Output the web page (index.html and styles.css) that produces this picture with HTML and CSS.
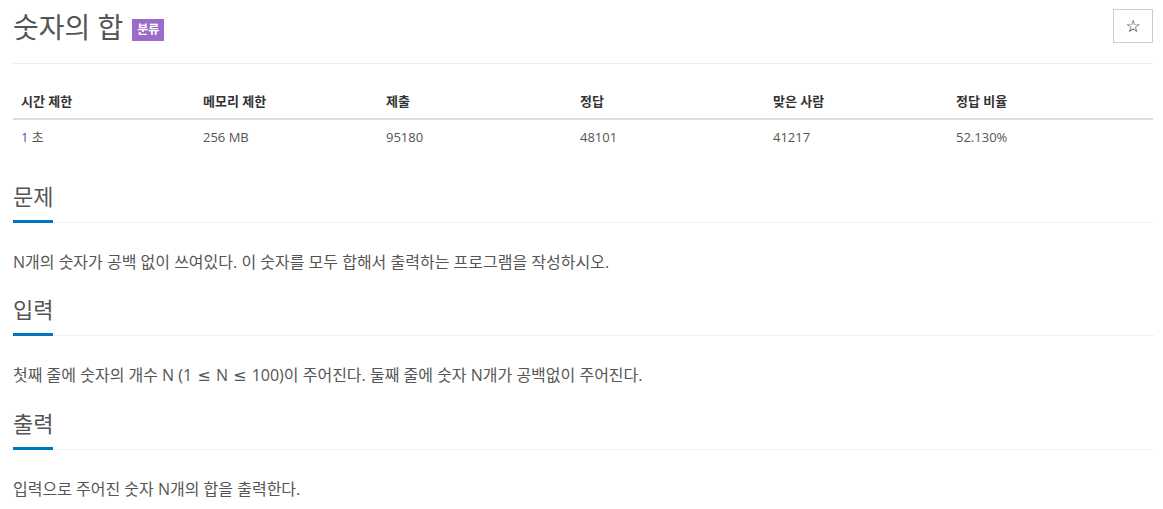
FILE: index.html
```html
<!DOCTYPE html>
<html lang="ko">
<head>
<meta charset="utf-8">
<link rel="stylesheet" href="styles.css">
</head>
<body>
<div class="page">
  <div class="page-header">
    <h1 class="title"><span>숫자의 합</span> <span class="badge">분류</span></h1>
    <button class="star">☆</button>
  </div>
  <table class="info">
    <thead>
      <tr><th class="c1">시간 제한</th><th class="c2">메모리 제한</th><th class="c3">제출</th><th class="c4">정답</th><th class="c5">맞은 사람</th><th class="c6">정답 비율</th></tr>
    </thead>
    <tbody>
      <tr><td><span class="num">1</span> 초</td><td>256 MB</td><td>95180</td><td>48101</td><td>41217</td><td>52.130%</td></tr>
    </tbody>
  </table>
  <section class="sec">
    <div class="headline"><h2>문제</h2></div>
    <p>N개의 숫자가 공백 없이 쓰여있다. 이 숫자를 모두 합해서 출력하는 프로그램을 작성하시오.</p>
  </section>
  <section class="sec">
    <div class="headline"><h2>입력</h2></div>
    <p>첫째 줄에 숫자의 개수 N (1 <span class="rel">≤</span> N <span class="rel">≤</span> 100)이 주어진다. 둘째 줄에 숫자 N개가 공백없이 주어진다.</p>
  </section>
  <section class="sec">
    <div class="headline"><h2>출력</h2></div>
    <p>입력으로 주어진 숫자 N개의 합을 출력한다.</p>
  </section>
</div>
</body>
</html>
```
FILE: styles.css
```css
* { box-sizing: border-box; }
body {
  margin: 0;
  background: #fff;
  font-family: "Open Sans", "Noto Sans CJK KR", sans-serif;
  color: #555;
  font-size: 13px;
}
.page { padding: 0 10px 0 13px; }
.page-header {
  display: flex;
  justify-content: space-between;
  align-items: flex-start;
  border-bottom: 1px solid #eee;
  height: 64px;
  padding-top: 9px;
}
.title {
  margin: 0;
  font-size: 28px;
  font-weight: 400;
  color: #555;
  line-height: 36px;
  display: flex;
  align-items: center;
}
.badge {
  display: inline-block;
  margin-left: 9px;
  background: #9b6bcc;
  color: #fff;
  font-size: 12px;
  font-weight: 700;
  padding: 0 5px;
  height: 22px;
  line-height: 22px;
  margin-top: 6px;
}
.star {
  width: 40px;
  height: 34px;
  border: 1px solid #ccc;
  background: #fff;
  font-size: 17px;
  line-height: 1;
  color: #111;
  font-family: "DejaVu Sans", sans-serif;
  padding: 0;
}
.info {
  width: 100%;
  border-collapse: collapse;
  margin-top: 20px;
  margin-bottom: 25px;
  table-layout: fixed;
}
.c1 { width: 182px; }
.c2 { width: 183px; }
.c3 { width: 194px; }
.c4 { width: 193px; }
.c5 { width: 183px; }
.info th {
  text-align: left;
  font-weight: 700;
  color: #333;
  padding: 7px 8px 8px;
  border-bottom: 2px solid #ddd;
  font-size: 13px;
}
.info td {
  padding: 7px 8px 8px;
  color: #555;
  font-size: 13px;
}
.num { color: #6f42c1; }
.sec { margin-top: 17px; }
.headline {
  border-bottom: 1px dotted #e2e2e2;
}
.headline h2 {
  display: inline-block;
  margin: 0 0 -1px 0;
  font-size: 22px;
  font-weight: 400;
  color: #555;
  line-height: 34px;
  padding-bottom: 7px;
  border-bottom: 3px solid #0076c0;
}
.sec p {
  margin: 26px 0 0 0;
  font-size: 16px;
  line-height: 26px;
  color: #555;
}
.rel {
  font-family: "DejaVu Sans", sans-serif;
  margin: 0 1px;
}
```
